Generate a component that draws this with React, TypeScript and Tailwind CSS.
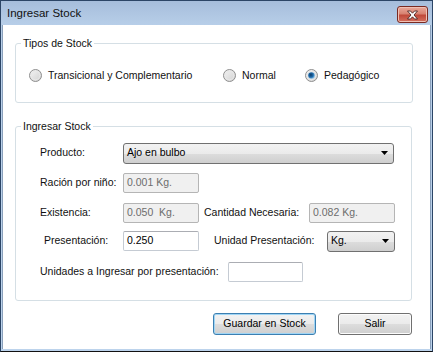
import React from 'react';

const font = { fontFamily: '"Liberation Sans", Arial, sans-serif' };

const Radio: React.FC<{ label: string; checked?: boolean; className?: string }> = ({ label, checked, className }) => (
  <div className={`flex items-center ${className ?? ''}`}>
    <svg width="13" height="13" viewBox="0 0 13 13" className="shrink-0">
      <defs>
        <linearGradient id="rfill" x1="0" y1="0" x2="1" y2="1">
          <stop offset="0" stopColor="#f6f6f6" />
          <stop offset="1" stopColor="#cfcfcf" />
        </linearGradient>
        <radialGradient id="rdot" cx="0.4" cy="0.4" r="0.6">
          <stop offset="0" stopColor="#0d3a66" />
          <stop offset="0.6" stopColor="#1f6bab" />
          <stop offset="1" stopColor="#7bb8e4" />
        </radialGradient>
      </defs>
      <circle cx="6.5" cy="6.5" r="6" fill="url(#rfill)" stroke="#8f8f8f" strokeWidth="1" />
      <circle cx="6.5" cy="6.5" r="4.3" fill="none" stroke="#e8e8e8" strokeWidth="1" />
      {checked && <circle cx="6.5" cy="6.5" r="3.3" fill="url(#rdot)" />}
    </svg>
    <span className="ml-[6px] text-[10.5px] text-[#111] leading-none">{label}</span>
  </div>
);

const Combo: React.FC<{ value: string; className?: string }> = ({ value, className }) => (
  <div
    className={`h-[21px] flex items-center justify-between rounded-[3px] border border-[#707070] bg-[linear-gradient(to_bottom,#f2f2f2_0%,#ebebeb_50%,#dddddd_50%,#cfcfcf_100%)] pl-[3px] pr-[4px] ${className ?? ''}`}
  >
    <span className="text-[10.5px] text-black">{value}</span>
    <svg width="8" height="4" viewBox="0 0 8 4">
      <path d="M0 0 H7 L3.5 4 Z" fill="#000" />
    </svg>
  </div>
);

const TextBox: React.FC<{ value?: string; disabled?: boolean; className?: string }> = ({ value, disabled, className }) => (
  <div
    className={`h-[20px] flex items-center rounded-[2px] border pl-[3px] text-[10.5px] ${
      disabled
        ? 'bg-[#f0f0f0] border-[#b5b5b5] text-[#6d6d6d]'
        : 'bg-white border-[#c5cbd3] border-t-[#abadb3] text-black'
    } ${className ?? ''}`}
  >
    {value}
  </div>
);

const Button: React.FC<{ label: string; focused?: boolean; className?: string }> = ({ label, focused, className }) => (
  <div
    className={`h-[22px] flex items-center justify-center rounded-[3px] border text-[10.5px] text-black ${
      focused
        ? 'border-[#3c7fb1] shadow-[inset_0_0_0_1px_#9fd5f5] bg-[linear-gradient(to_bottom,#f2f2f2_0%,#ebebeb_50%,#dddddd_50%,#cfcfcf_100%)]'
        : 'border-[#707070] shadow-[inset_0_0_0_1px_#fcfcfc] bg-[linear-gradient(to_bottom,#f2f2f2_0%,#ebebeb_50%,#dddddd_50%,#cfcfcf_100%)]'
    } ${className ?? ''}`}
  >
    {label}
  </div>
);

const Label: React.FC<{ text: string; className?: string }> = ({ text, className }) => (
  <span className={`shrink-0 text-[10.5px] text-[#111] ${className ?? ''}`}>{text}</span>
);

export default function App() {
  return (
    <div
      style={font}
      className="w-[433px] h-[352px] flex flex-col border border-[#2c4566] border-b-[#111] bg-[linear-gradient(to_bottom,#a6bddb_0px,#b8cfe9_25px,#bcd3ec_100%)]"
    >
      {/* Title bar */}
      <div className="h-[24px] shrink-0 flex items-center justify-between pl-[6px] pr-[4px]">
        <span className="text-[11.5px] text-[#111] leading-none mt-[2px]">Ingresar Stock</span>
        <div className="w-[31px] h-[17px] mt-[3px] rounded-[3px] border border-[#7a2a22] bg-[linear-gradient(to_bottom,#e9a99b_0%,#d88271_45%,#c0493a_55%,#d4705f_100%)] shadow-[inset_0_0_0_1px_#f0c0b4] flex items-center justify-center">
          <svg width="13" height="10" viewBox="0 0 13 10">
            <path
              d="M1.5 1 L4.5 1 L6.5 3.2 L8.5 1 L11.5 1 L8 5 L11.5 9 L8.5 9 L6.5 6.8 L4.5 9 L1.5 9 L5 5 Z"
              fill="#fff"
              stroke="#4a2320"
              strokeWidth="0.9"
              strokeLinejoin="round"
            />
          </svg>
        </div>
      </div>

      {/* Client area */}
      <div className="flex-1 mx-[1px] mb-[2px] bg-white border-l border-r border-[#8aa0bb] flex flex-col">
        <fieldset className="mt-[11px] ml-[12px] w-[398px] border border-[#d5dfe5] rounded-[3px] px-0 pb-[20px]">
          <legend className="ml-[5px] px-[2px] text-[10.5px] leading-[14px] text-[#111]">Tipos de Stock</legend>
          <div className="flex mt-[19px] pl-[13px] h-[13px]">
            <Radio label="Transicional y Complementario" className="w-[194px]" />
            <Radio label="Normal" className="w-[82px]" />
            <Radio label="Pedagógico" checked />
          </div>
        </fieldset>

        <fieldset className="mt-[16px] ml-[12px] w-[397px] border border-[#d5dfe5] rounded-[3px] px-0 pb-[18px]">
          <legend className="ml-[5px] px-[2px] text-[10.5px] leading-[14px] text-[#111]">Ingresar Stock</legend>
          <div className="flex flex-col pl-[24px]">
            <div className="flex items-center h-[20px] mt-[10px]">
              <Label text="Producto:" className="w-[83px]" />
              <Combo value="Ajo en bulbo" className="w-[271px]" />
            </div>
            <div className="flex items-center h-[20px] mt-[10px]">
              <Label text="Ración por niño:" className="w-[83px]" />
              <TextBox value="0.001 Kg." disabled className="w-[76px]" />
            </div>
            <div className="flex items-center h-[20px] mt-[10px]">
              <Label text="Existencia:" className="w-[83px]" />
              <TextBox value="0.050  Kg." disabled className="w-[76px] whitespace-pre" />
              <Label text="Cantidad Necesaria:" className="ml-[5px] w-[105px]" />
              <TextBox value="0.082 Kg." disabled className="w-[86px]" />
            </div>
            <div className="flex items-center h-[20px] mt-[8px]">
              <Label text="Presentación:" className="w-[83px] pl-[4px]" />
              <TextBox value="0.250" className="w-[76px]" />
              <Label text="Unidad Presentación:" className="ml-[15px] w-[113px]" />
              <Combo value="Kg." className="w-[68px]" />
            </div>
            <div className="flex items-center h-[20px] mt-[11px]">
              <Label text="Unidades a Ingresar por presentación:" className="w-[188px]" />
              <TextBox className="w-[75px]" />
            </div>
          </div>
        </fieldset>

        <div className="flex mt-[12px] ml-[210px]">
          <Button label="Guardar en Stock" focused className="w-[103px]" />
          <Button label="Salir" className="ml-[22px] w-[74px]" />
        </div>
      </div>
    </div>
  );
}
